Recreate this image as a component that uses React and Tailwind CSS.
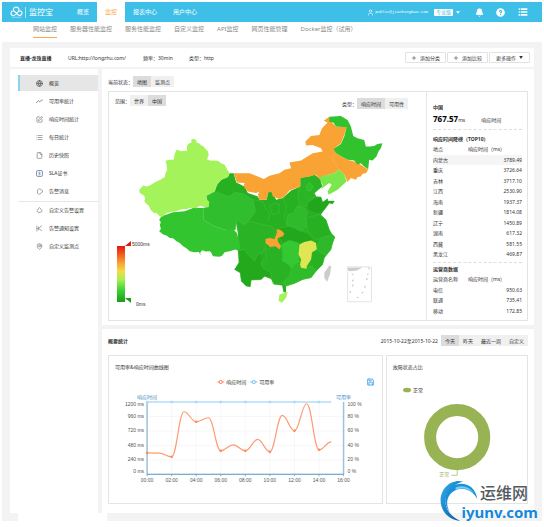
import { useState } from 'react'
import clsx from 'clsx'
import { Bell, CircleQuestionMark, List, User, Plus, Globe, SquarePen, File, Save, MapPin } from 'lucide-react'

const NAV = ['概览', '监控', '报表中心', '用户中心']
const SUB_NAV = ['网站监控', '服务器性能监控', '服务性能监控', '自定义监控', 'API监控', '网页性能管理', 'Docker监控（试用）']

const TrendIcon = () => (
  <svg viewBox="0 0 24 24" className="w-[7px] h-[7px]" fill="none" stroke="currentColor" strokeWidth="2.5">
    <path d="M1 17 L8 9 L13 13 L18 8 L23 7" />
  </svg>
)
const SlaIcon = () => (
  <svg viewBox="0 0 24 24" className="w-[7px] h-[7px] text-[#4a6c94]" fill="none" stroke="currentColor" strokeWidth="2.5">
    <rect x="2" y="2" width="20" height="20" rx="4" />
    <path d="M15 8 C10 6 7 10 12 12 C17 14 14 18 9 16" />
  </svg>
)
const MessageIcon = () => (
  <svg viewBox="0 0 24 24" className="w-[7px] h-[7px]" fill="none" stroke="currentColor" strokeWidth="2">
    <path d="M5 7 C8 2 16 2 18 7 L22 9 V14 L18 16 C16 22 8 22 5 18 Z" />
  </svg>
)
const AlarmIcon = () => (
  <svg viewBox="0 0 24 24" className="w-[7px] h-[7px]" fill="none" stroke="currentColor" strokeWidth="2">
    <path d="M12 2 C8 4 8 9 3 12 C3 16 6 17 9 17 L12 21 L15 17 C18 17 21 16 21 12 C16 9 16 4 12 2 Z" />
  </svg>
)
const NotifyIcon = () => (
  <svg viewBox="0 0 24 24" className="w-[7px] h-[7px]" fill="none" stroke="currentColor" strokeWidth="2">
    <path d="M3 2 V22 M3 12 H9 M11 9 L20 3 M11 13 L20 20 M9 6 V18" />
  </svg>
)

const MENU = [
  { label: '概览', icon: <Globe className="w-[7px] h-[7px]" strokeWidth={3} /> },
  { label: '可用率统计', icon: <TrendIcon /> },
  { label: '响应时间统计', icon: <SquarePen className="w-[7px] h-[7px]" /> },
  { label: '每日统计', icon: <List className="w-[7px] h-[7px]" /> },
  { label: '历史快照', icon: <File className="w-[7px] h-[7px]" /> },
  { label: 'SLA证书', icon: <SlaIcon /> },
  { label: '告警消息', icon: <MessageIcon /> },
]
const SETTINGS = [
  { label: '自定义告警设置', icon: <AlarmIcon /> },
  { label: '告警通知设置', icon: <NotifyIcon /> },
  { label: '自定义监测点', icon: <MapPin className="w-[7px] h-[7px]" /> },
]

const TOP10 = [
  ['内蒙古', '3789.49'], ['重庆', '3726.64'], ['吉林', '3717.10'], ['江西', '2530.90'], ['海南', '1937.37'],
  ['新疆', '1814.08'], ['辽宁', '1450.89'], ['湖南', '617.32'], ['西藏', '581.55'], ['黑龙江', '469.87'],
]
const CARRIERS = [['电信', '950.63'], ['联通', '735.41'], ['移动', '172.85']]

const RESPONSE = [355, 350, 289, 1039, 872, 939, 389, 489, 389, 578, 372, 978, 722, 1172, 406, 539]

// plot area of the line chart
const X0 = 38, X1 = 234, Y0 = 27, Y1 = 99
const px = h => X0 + (h / 16) * (X1 - X0)
const py = v => Y1 - (v / 1200) * (Y1 - Y0)

function smoothPath(values) {
  const pts = values.map((v, i) => [px(i), py(v)])
  const slope = pts.map((p, i) => {
    if (i === 0 || i === pts.length - 1) return 0
    const a = p[1] - pts[i - 1][1]
    const b = pts[i + 1][1] - p[1]
    return a * b <= 0 ? 0 : Math.sign(a) * Math.min(Math.abs(a), Math.abs(b))
  })
  return pts.reduce((d, p, i) => {
    if (i === 0) return `M${p[0]},${p[1]}`
    const q = pts[i - 1]
    const dx = (p[0] - q[0]) * 0.4
    return `${d} C${q[0] + dx},${q[1] + slope[i - 1] * 0.4} ${p[0] - dx},${p[1] - slope[i] * 0.4} ${p[0]},${p[1]}`
  }, '')
}

function Segmented({ label, options, initial }) {
  const [active, setActive] = useState(initial)
  return (
    <div className="flex items-center h-[11px]">
      {label && <span className="whitespace-nowrap">{label}</span>}
      {options.map(o => (
        <button key={o} type="button" onClick={() => setActive(o)}
          className={clsx('h-[11px] px-[4px] whitespace-nowrap text-[#333]', active === o ? 'bg-[#dcdcdc]' : 'bg-[#f0f0f0]')}>
          {o}
        </button>
      ))}
    </div>
  )
}

function Header() {
  return (
    <header>
      <div className="h-[20px] bg-[#3dbfe8] text-white flex items-center pl-[8px] pr-[14px] text-[6px]">
        <a href="#" className="flex items-center w-[59px] text-[8px]">
          <svg viewBox="0 0 40 36" className="w-[13px] h-[12px]" fill="none" stroke="currentColor" strokeWidth="3.5">
            <path d="M19 24 C15 30 3 31 3 22 C3 14 12 13 16 18 L24 26 C29 31 37 28 37 21 C37 14 28 13 24 18 L19 24" />
            <path d="M11 14 C9 5 16 2 20 3 C26 4 29 9 27 15" />
            <path d="M5 34 H35" strokeWidth="1.5" />
          </svg>
          <span className="ml-[2px] mr-[3px] w-px h-[11px] bg-white/60" />
          监控宝
        </a>
        <nav className="flex h-full">
          {NAV.map(n => (
            <a key={n} href="#" className={clsx('h-full px-[8px] flex items-center whitespace-nowrap', n === '监控' && 'bg-white text-[#fba74f]')}>{n}</a>
          ))}
        </nav>
        <div className="ml-auto flex items-center">
          <User className="w-[7px] h-[7px]" />
          <span className="ml-px font-['Liberation_Mono'] text-[4px]">public@jiankongbao.com</span>
          <span className="ml-[6px] bg-white text-[#3dbfe8] text-[5px] leading-[7px] px-[2px] rounded-[1px]">专业版</span>
          <svg viewBox="0 0 6 4" className="ml-[3px] w-[4px] h-[3px]" fill="currentColor"><path d="M0 0 H6 L3 4 Z" /></svg>
          <button type="button" aria-label="通知" className="ml-[15px]"><Bell className="w-[9px] h-[9px]" fill="currentColor" /></button>
          <button type="button" aria-label="帮助" className="ml-[12px]">
            <CircleQuestionMark className="w-[9px] h-[9px] fill-white [&>path]:stroke-[#3dbfe8]" strokeWidth={3} />
          </button>
          <button type="button" aria-label="菜单" className="ml-[13px]"><List className="w-[10px] h-[10px]" strokeWidth={4} /></button>
        </div>
      </div>
      <nav className="h-[20px] flex gap-[13px] pl-[31px] text-[6px] text-[#888]">
        {SUB_NAV.map((n, i) => (
          <a key={n} href="#" className={clsx('h-[16px] leading-[15px] whitespace-nowrap', i === 0 && 'border-b border-[#fba74f]')}>{n}</a>
        ))}
      </nav>
    </header>
  )
}

function ToolButton({ children }) {
  return (
    <button type="button" className="w-[41px] h-[11px] flex items-center justify-center gap-[3px] border border-[#e2e2e2] rounded-[1px] bg-white whitespace-nowrap">
      {children}
    </button>
  )
}

function InfoBar() {
  return (
    <div className="h-[19px] bg-white flex items-center pl-[10px] pr-[4px]">
      <b className="w-[48px]">直播-龙珠直播</b>
      <span className="w-[75px]">URL:http://longzhu.com/</span>
      <span className="w-[46px]">频率：30min</span>
      <span>类型：http</span>
      <div className="ml-auto flex gap-px">
        <ToolButton><Plus className="w-[6px] h-[6px]" />添加分类</ToolButton>
        <ToolButton><Plus className="w-[6px] h-[6px]" />添加比较</ToolButton>
        <ToolButton>更多操作<svg viewBox="0 0 6 5" className="w-[4px] h-[3px]" fill="currentColor"><path d="M0 0 H6 L3 5 Z" /></svg></ToolButton>
      </div>
    </div>
  )
}

function MenuList({ items, active }) {
  return (
    <ul className="flex flex-col gap-[2px]">
      {items.map(m => (
        <li key={m.label}>
          <a href="#" className={clsx('h-[16px] pl-[16px] flex items-center gap-[6px] border-l-2 whitespace-nowrap', m.label === active ? 'bg-[#e6e6e6] border-[#86d6f0]' : 'border-transparent')}>
            <span className="text-[#666]">{m.icon}</span>{m.label}
          </a>
        </li>
      ))}
    </ul>
  )
}

function ChinaMap() {
  return (
    <svg viewBox="327 327 954 636" className="block w-full" strokeLinejoin="round">
      {/* central, southern and eastern provinces */}
      <path fill="#27b021" d="M690,520 L702,520 710,548 735,560 745,580 775,590 780,600 802,600 805,575 817,575 830,600 850,595 875,572 903,560 903,535 930,530 945,525 962,538 968,560 945,580 950,590 965,592 970,608 985,597 985,604 1005,604 1000,612 990,610 975,630 965,645 980,660 990,690 995,705 1007,712 1000,730 995,750 975,775 970,795 950,815 935,835 910,840 885,852 860,860 860,880 852,878 848,858 825,855 815,850 835,855 820,850 815,838 795,830 785,840 755,842 752,862 740,860 725,845 722,820 705,810 718,790 715,755 715,700 700,620 645,575 652,555 665,540 685,532 Z" />
      {/* Qinghai */}
      <path fill="#30bd2e" stroke="#4ac545" strokeWidth="1.5" d="M620,588 L645,575 672,585 690,590 705,578 730,582 760,600 768,635 750,660 735,675 710,660 708,690 690,695 640,678 612,660 612,625 627,622 Z" />
      {/* Sichuan, Yunnan */}
      <path fill="#2ab324" stroke="#45c33e" strokeWidth="1.5" d="M710,660 L735,675 752,665 790,675 815,680 830,695 825,712 800,718 798,745 785,765 778,760 765,785 745,765 735,750 720,752 716,700 Z" />
      <path fill="#24a91d" stroke="#3eba38" strokeWidth="1.5" d="M718,755 L735,750 745,765 765,785 778,760 790,770 785,795 800,808 815,820 815,838 795,830 785,840 755,842 752,862 740,860 725,845 722,820 705,810 718,790 Z" />
      <path fill="#29b223" stroke="#45c33e" strokeWidth="1.5" d="M798,750 L830,738 848,750 850,785 878,800 870,830 850,850 825,855 815,838 815,820 790,805 785,790 800,780 Z" />
      {/* Gansu, Ningxia, Shaanxi, Shanxi */}
      <path fill="none" stroke="#45c33e" strokeWidth="1.5" d="M760,600 L790,605 800,630 812,640 805,665 M810,620 L825,610 840,615 838,640 820,645 Z M850,595 L862,620 855,650 865,680 840,690 M895,570 L905,600 895,625 900,650 865,660 M865,680 L890,690 920,695 950,680" />
      {/* Hebei, Beijing, Shandong, Shanxi */}
      <path fill="#2ab524" stroke="#45c33e" strokeWidth="1.5" d="M903,560 L903,535 930,530 945,525 962,538 968,560 945,580 950,590 930,600 922,620 900,620 895,590 Z" />
      <path fill="#2fbd2a" stroke="#50ca48" strokeWidth="1.5" d="M920,560 L930,548 942,560 935,572 924,572 Z" />
      <path fill="#22a61b" stroke="#3eba38" strokeWidth="1.5" d="M925,610 L950,592 965,592 970,608 985,597 985,604 1005,604 1000,612 990,610 975,630 960,642 935,638 922,625 Z" />
      <path fill="#2fba2b" stroke="#48c542" strokeWidth="1.5" d="M865,645 L885,640 890,622 915,625 925,640 918,655 925,680 905,695 885,682 862,675 Z" />
      <path fill="#27b021" stroke="#45c33e" strokeWidth="1.5" d="M920,655 L960,645 980,660 990,690 1000,707 970,715 950,720 925,695 Z" />
      <path fill="#23a71c" stroke="#3eba38" strokeWidth="1.5" d="M840,685 L870,680 905,695 925,700 945,722 900,732 870,722 850,730 840,715 Z" />
      <path fill="#2fb92a" stroke="#45c33e" strokeWidth="1.5" d="M965,715 L1000,705 1007,712 1000,730 995,750 980,768 960,755 950,745 Z" />
      <path fill="#28b223" stroke="#45c33e" strokeWidth="1.5" d="M952,750 L962,757 980,768 975,775 970,795 950,815 935,800 922,800 935,780 938,758 Z" />
      <path fill="#2fbc2a" stroke="#45c33e" strokeWidth="1.5" d="M878,806 L885,795 902,795 922,806 940,800 950,815 935,835 910,840 885,852 860,860 850,852 870,830 Z" />
      {/* Tibet, Xinjiang */}
      <path fill="#33c530" d="M485,650 L520,638 555,635 580,625 612,625 612,660 640,678 680,692 700,688 712,700 722,740 718,755 708,750 690,755 675,758 668,768 660,772 640,770 634,758 630,755 618,756 608,752 602,758 602,767 598,757 584,758 570,755 560,746 550,740 540,730 530,725 520,716 510,715 500,708 490,705 478,695 483,688 480,675 483,668 478,660 Z" />
      <path fill="#a4f35a" d="M575,418 L582,417 590,420 590,428 598,430 604,436 612,440 618,448 625,455 627,466 622,478 630,482 655,483 664,490 675,495 682,508 690,520 685,532 665,540 652,555 645,575 620,588 622,600 629,606 627,622 615,622 600,618 590,626 575,624 560,628 545,629 530,635 515,636 500,640 487,652 478,648 470,640 462,640 452,630 447,618 440,612 433,605 436,598 433,588 420,580 418,570 430,557 440,560 450,557 458,552 470,545 482,540 495,532 497,520 502,510 500,494 497,483 510,480 522,480 524,465 530,450 545,454 562,453 561,442 565,432 575,428 Z" />
      {/* Inner Mongolia, Jilin */}
      <path fill="#f8a333" d="M702,520 L750,520 775,530 793,538 810,528 840,520 855,510 875,505 870,488 905,482 940,460 970,455 965,445 940,435 920,437 918,425 935,408 960,405 968,385 985,368 973,362 990,350 1000,370 1010,380 1042,382 1035,405 1025,430 1005,445 1010,460 1045,480 1075,488 1107,510 1100,520 1090,522 1085,530 1075,532 1070,540 1055,535 1045,547 1035,525 1020,510 1005,520 970,530 962,540 950,525 930,530 903,535 903,560 870,572 855,590 840,598 820,590 815,575 805,580 802,600 780,600 775,585 780,575 770,580 745,575 732,560 735,550 712,548 Z" />
      <path fill="none" stroke="#fbb65a" strokeWidth="2" d="M1010,460 L998,472 1005,490 1015,500 1020,510" />
      <path fill="#32c22d" d="M990,350 L1025,348 1045,360 1055,380 1062,408 1075,415 1095,420 1100,440 1112,440 1125,438 1135,432 1150,430 1145,445 1138,455 1132,470 1120,482 1110,480 1107,508 1095,500 1085,490 1075,494 1065,482 1045,480 1010,460 1003,447 1025,432 1035,410 1042,382 1010,380 1002,368 990,365 Z" />
      <path fill="#7ae84c" d="M965,530 L1005,520 1020,510 1035,525 1042,545 1015,570 988,585 985,575 997,555 990,550 965,568 970,555 962,538 Z" />
      {/* Hunan, Jiangxi, Chongqing, Hainan */}
      <path fill="#35c832" d="M845,735 L870,722 898,730 897,765 902,790 885,795 878,808 860,790 848,785 850,765 Z" />
      <path fill="#e0e553" d="M900,735 L915,727 935,723 950,730 952,750 938,758 935,780 922,800 922,808 905,805 902,795 905,780 897,765 Z" />
      <path fill="#f8a333" d="M832,688 L845,692 855,702 850,710 835,715 835,725 845,740 840,750 828,740 812,742 798,730 798,718 810,715 825,718 832,700 Z" />
      <path fill="#a4f35a" d="M840,885 L865,878 860,895 848,910 837,905 Z" />
      {/* Taiwan and the South China Sea inset */}
      <path fill="#cccccc" d="M990,798 L996,800 992,825 983,848 975,835 975,820 Z" />
      <rect x="1045" y="802" width="72" height="105" fill="none" stroke="#dedede" strokeWidth="2.5" />
      <path fill="#cccccc" d="M1045,805 L1090,804 1072,813 1052,815 1046,812 Z" />
      <path fill="none" stroke="#bbbbbb" strokeWidth="3" d="M1058,822 l5,5 M1062,840 l-2,6 M1062,855 l-2,6 M1052,875 l2,6 M1073,893 l4,3 M1088,882 l4,-5 M1096,865 l3,-6 M1102,842 l2,-6 M1104,825 l4,-2 M1107,804 l4,6" />
    </svg>
  )
}

function MapLegend() {
  return (
    <div className="absolute left-[8px] bottom-[13px] flex gap-px">
      <svg viewBox="0 0 14 62" className="w-[14px] h-[62px]">
        <defs>
          <linearGradient id="heat" x1="0" y1="0" x2="0" y2="1">
            <stop offset="0" stopColor="#e8150d" />
            <stop offset="0.3" stopColor="#f9a032" />
            <stop offset="0.45" stopColor="#f3dc45" />
            <stop offset="0.6" stopColor="#a8ef55" />
            <stop offset="0.8" stopColor="#38d034" />
            <stop offset="1" stopColor="#1d9d18" />
          </linearGradient>
        </defs>
        <rect y="5" width="8" height="56" fill="url(#heat)" />
        <path d="M8 5 L14 0 V5 Z" fill="#e8150d" />
        <path d="M8 57 H14 V62 Z" fill="#1d9d18" />
      </svg>
      <div className="flex flex-col justify-between h-[66px] text-[5px] leading-[6px] font-['Liberation_Sans']">
        <span>5000ms</span>
        <span className="pl-[4px]">0ms</span>
      </div>
    </div>
  )
}

function DataTable({ head, rows, highlight }) {
  return (
    <table className="w-full text-[5px] leading-[7px]">
      <thead>
        <tr className="h-[11px] text-left">
          <th className="font-normal w-[35px]">{head}</th>
          <th className="font-normal whitespace-nowrap">响应时间（ms）</th>
        </tr>
      </thead>
      <tbody>
        {rows.map(([name, value], i) => (
          <tr key={name} className={clsx(i % 2 ? 'h-[11px]' : 'h-[10px]', highlight && i === 0 && 'bg-[#f5f5f5]')}>
            <td>{name}</td>
            <td className="text-right">{value}</td>
          </tr>
        ))}
      </tbody>
    </table>
  )
}

function Ranking() {
  return (
    <aside className="w-[101px] shrink-0 border-l border-[#e8e8e8] pl-[6px] pr-[5px] pt-[10px] pb-[4px]">
      <b className="block leading-[10px]">中国</b>
      <div className="flex items-baseline leading-[14px] pb-[2px] border-b border-dashed border-[#ddd]">
        <b className="text-[8px] text-black">767.57</b>
        <span>ms</span>
        <span className="ml-[16px]">响应时间</span>
      </div>
      <h3 className="font-bold leading-[10px] pt-[4px]">响应时间降榜（TOP10）</h3>
      <DataTable head="地点" rows={TOP10} highlight />
      <h3 className="font-bold leading-[10px] mt-[2px] pt-px border-t border-dashed border-[#ddd]">运营商数据</h3>
      <DataTable head="运营商名称" rows={CARRIERS} />
    </aside>
  )
}

function LineChart() {
  const hours = [0, 2, 4, 6, 8, 10, 12, 14, 16]
  return (
    <svg viewBox="0 0 272 127" className="block w-full" fontSize="5">
      <g stroke="#ff8a60" fill="#fff"><path d="M108 7 H115" /><circle cx="111.5" cy="7" r="1.5" /></g>
      <text x="117" y="9" fill="#333">响应时间</text>
      <g stroke="#7cc4f2" fill="#fff"><path d="M141 7 H148" /><circle cx="144.5" cy="7" r="1.5" /></g>
      <text x="150" y="9" fill="#333">可用率</text>
      <Save x="257" y="3" width="8" height="8" color="#5fb0ee" strokeWidth={3} />
      <text x="38" y="24" textAnchor="middle" fill="#4a8fbe">响应时间</text>
      <text x="234" y="24" textAnchor="middle" fill="#4a8fbe">可用率</text>

      {[0, 1, 2, 3, 4].map(i => <path key={i} d={`M${X0} ${py(i * 240)} H${X1}`} stroke="#eee" strokeWidth="0.5" />)}
      {hours.map(h => <path key={h} d={`M${px(h)} ${Y0} V${Y1 + 2}`} stroke="#eee" strokeWidth="0.5" />)}
      <path d={`M${X0} ${Y0} V${Y1} M${X1} ${Y0} V${Y1}`} stroke="#9cc3de" strokeWidth="1.5" />
      <path d={`M${X0} ${Y1} H${X1}`} stroke="#5596c4" />
      <g fill="#555" className="font-['Liberation_Sans']">
        {[[1200, 31], [960, 43], [720, 57], [480, 72], [240, 86], [0, 98]].map(([v, y]) => (
          <g key={v}>
            <text x="35" y={y} textAnchor="end">{v} ms</text>
            <text x="238" y={y}>{v / 12} %</text>
          </g>
        ))}
        {hours.map(h => (
          <g key={h}>
            <path d={`M${px(h)} ${Y1} v2`} stroke="#5596c4" strokeWidth="0.7" />
            <text x={px(h)} y="107" textAnchor="middle">{String(h).padStart(2, '0')}:00</text>
          </g>
        ))}
      </g>
      <path d={`M${X0} ${Y0} H${px(15)}`} stroke="#8ccdf5" />
      {hours.slice(0, 8).map(h => <circle key={h} cx={px(h)} cy={Y0} r="1" fill="#c6e7fa" stroke="#8ccdf5" strokeWidth="0.6" />)}
      <path d={smoothPath(RESPONSE)} fill="none" stroke="#ff9a76" strokeWidth="1.2" />
      {hours.slice(0, 8).map(h => <circle key={h} cx={px(h)} cy={py(RESPONSE[h])} r="1.3" fill="#ff8a60" />)}
    </svg>
  )
}

function StatusPie() {
  return (
    <svg viewBox="0 0 140 127" className="block w-full" fontSize="5">
      <ellipse cx="20" cy="15" rx="4" ry="2.3" fill="#98b354" />
      <text x="26" y="17" fill="#333">正常</text>
      <circle cx="70" cy="62" r="27" fill="none" stroke="#98b354" strokeWidth="12" />
      <path d="M70 95 V100 H64" fill="none" stroke="#98b354" strokeWidth="0.7" />
      <text x="62" y="101" textAnchor="end" fill="#98b354">正常</text>
    </svg>
  )
}

function Watermark() {
  return (
    <div className="absolute right-[4px] bottom-0 flex items-end pointer-events-none">
      <svg viewBox="0 0 112 120" className="w-[38px] h-[41px] -mr-[16px]">
        <defs>
          <linearGradient id="swirl" x1="0" y1="0" x2="1" y2="1">
            <stop offset="0" stopColor="#2db4ee" />
            <stop offset="1" stopColor="#0a4f9e" />
          </linearGradient>
        </defs>
        <path fill="url(#swirl)" d="M68 4 C28 -6 -8 34 4 76 C12 104 36 119 60 120 C34 108 16 88 16 62 C16 34 38 12 68 4 Z" />
        <path fill="#1b8fd8" d="M34 20 C62 0 104 12 110 56 C98 30 64 14 38 34 C18 48 16 74 30 96 C10 74 10 40 34 20 Z" />
        <path fill="#6fd0f5" d="M46 22 C66 12 92 22 100 40 C84 24 64 20 46 30 Z" />
      </svg>
      <div className="flex flex-col items-end whitespace-nowrap [text-shadow:0_0_1px_#fff,0_0_2px_#fff]">
        <span className="text-[16px] leading-[19px] mr-[10px] text-[#555a60] font-medium">运维网</span>
        <span className="text-[15px] leading-[18px] font-bold text-[#1787dc] font-['Noto_Sans']">iyunv.com</span>
      </div>
    </div>
  )
}

export default function App() {
  return (
    <div className="bg-white p-[2px] text-[5px] leading-[8px] text-[#333] font-['Noto_Sans','Noto_Sans_CJK_SC',sans-serif]">
      <Header />
      <div className="relative bg-[#f3f3f3]">
        <div className="pt-[6px] px-[8px] flex flex-col gap-[2px]">
          <InfoBar />
          <div className="flex gap-[4px]">
            <nav className="w-[88px] shrink-0 bg-white pl-[8px] pt-[6px]">
              <MenuList items={MENU} active="概览" />
              <div className="mt-[2px] border-t border-[#e6e6e6]">
                <MenuList items={SETTINGS} />
              </div>
            </nav>

            <main className="flex-1 min-w-0 flex flex-col gap-[4px]">
              <section className="bg-white pt-[7px] pb-[4px] px-[6px]">
                <Segmented label="当前状态：" options={['地图', '监测点']} initial="地图" />
                <div className="mt-[4px] flex border border-[#e4e4e4]">
                  <div className="relative flex-1 min-w-0">
                    <div className="h-[17px] pt-[3px] pl-[6px] pr-[18px] flex justify-between">
                      <Segmented label="范围：" options={['世界', '中国']} initial="中国" />
                      <div className="self-end"><Segmented label="类型：" options={['响应时间', '可用性']} initial="响应时间" /></div>
                    </div>
                    <ChinaMap />
                    <MapLegend />
                  </div>
                  <Ranking />
                </div>
              </section>

              <section className="bg-white pt-[6px] pb-[9px] px-[6px]">
                <div className="flex items-center justify-between">
                  <b>概要统计</b>
                  <div className="flex items-center gap-[3px]">
                    <span>2015-10-22至2015-10-22</span>
                    <Segmented options={['今天', '昨天', '最近一周', '自定义']} initial="今天" />
                  </div>
                </div>
                <div className="mt-[9px] grid grid-cols-[274fr_142fr] gap-[3px]">
                  <div className="border border-[#e4e4e4]">
                    <h3 className="pt-[6px] pb-[3px] pl-[6px] leading-[10px]">可用率&amp;响应时间曲线图</h3>
                    <LineChart />
                  </div>
                  <div className="border border-[#e4e4e4]">
                    <h3 className="pt-[6px] pb-[3px] pl-[6px] leading-[10px]">故障状态占比</h3>
                    <StatusPie />
                  </div>
                </div>
              </section>
            </main>
          </div>
        </div>
        <div className="h-[8px] pl-[16px]">
          <div className="w-[89px] h-full bg-white" />
        </div>
        <Watermark />
      </div>
    </div>
  )
}
